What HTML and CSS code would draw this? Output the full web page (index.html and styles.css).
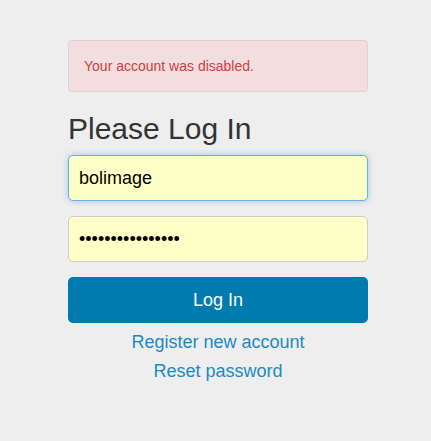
FILE: index.html
```html
<!DOCTYPE html>
<html>
<head>
    <title>Please Log In</title>
    <link rel="stylesheet" href="styles.css">
</head>
<body>
    <div class="container">
        <div class="alert">Your account was disabled.</div>
        <h1>Please Log In</h1>
        <form id="loginForm">
            <div class="form-group">
                <input type="text" class="field focused" name="username" value="bolimage">
            </div>
            <div class="form-group">
                <input type="password" class="field" name="password" value="xxxxxxxxxxxxxxxx">
            </div>
            <button type="submit">Log In</button>
        </form>
        <div class="links">
            <a href="#">Register new account</a>
            <a href="#">Reset password</a>
        </div>
    </div>
</body>
</html>
```

FILE: styles.css
```css
html { background: #eeeeee; }
body { margin: 0; font-family: "Liberation Sans", Arial, sans-serif; color: #333; }
.container { width: 300px; margin: 0 auto; padding: 40px 0 0 5px; }
.alert { height: 52px; box-sizing: border-box; padding: 0 15px; display: flex; align-items: center; background: #f2dede; border: 1px solid #ebccd1; border-radius: 4px; color: #d2403c; font-size: 14px; }
h1 { font-size: 30px; font-weight: normal; margin: 20px 0 9px; line-height: 34px; color: #333; }
.form-group { margin-bottom: 15px; }
.field { display: block; width: 100%; height: 46px; box-sizing: border-box; padding: 0 10px; font-family: inherit; font-size: 18px; color: #000; background: #ffffc8; border: 1px solid #ccc; border-radius: 5px; outline: none; }
.field.focused { border-color: #66afe9; box-shadow: 0 0 6px rgba(102, 175, 233, 0.6); }
button { display: block; width: 100%; height: 46px; border: none; border-radius: 5px; background: #007bb0; color: #fff; font-family: inherit; font-size: 18px; cursor: pointer; }
.links { display: flex; flex-direction: column; align-items: center; margin-top: 5px; }
.links a { color: #1a8ac7; text-decoration: none; font-size: 18px; line-height: 29px; }
```
